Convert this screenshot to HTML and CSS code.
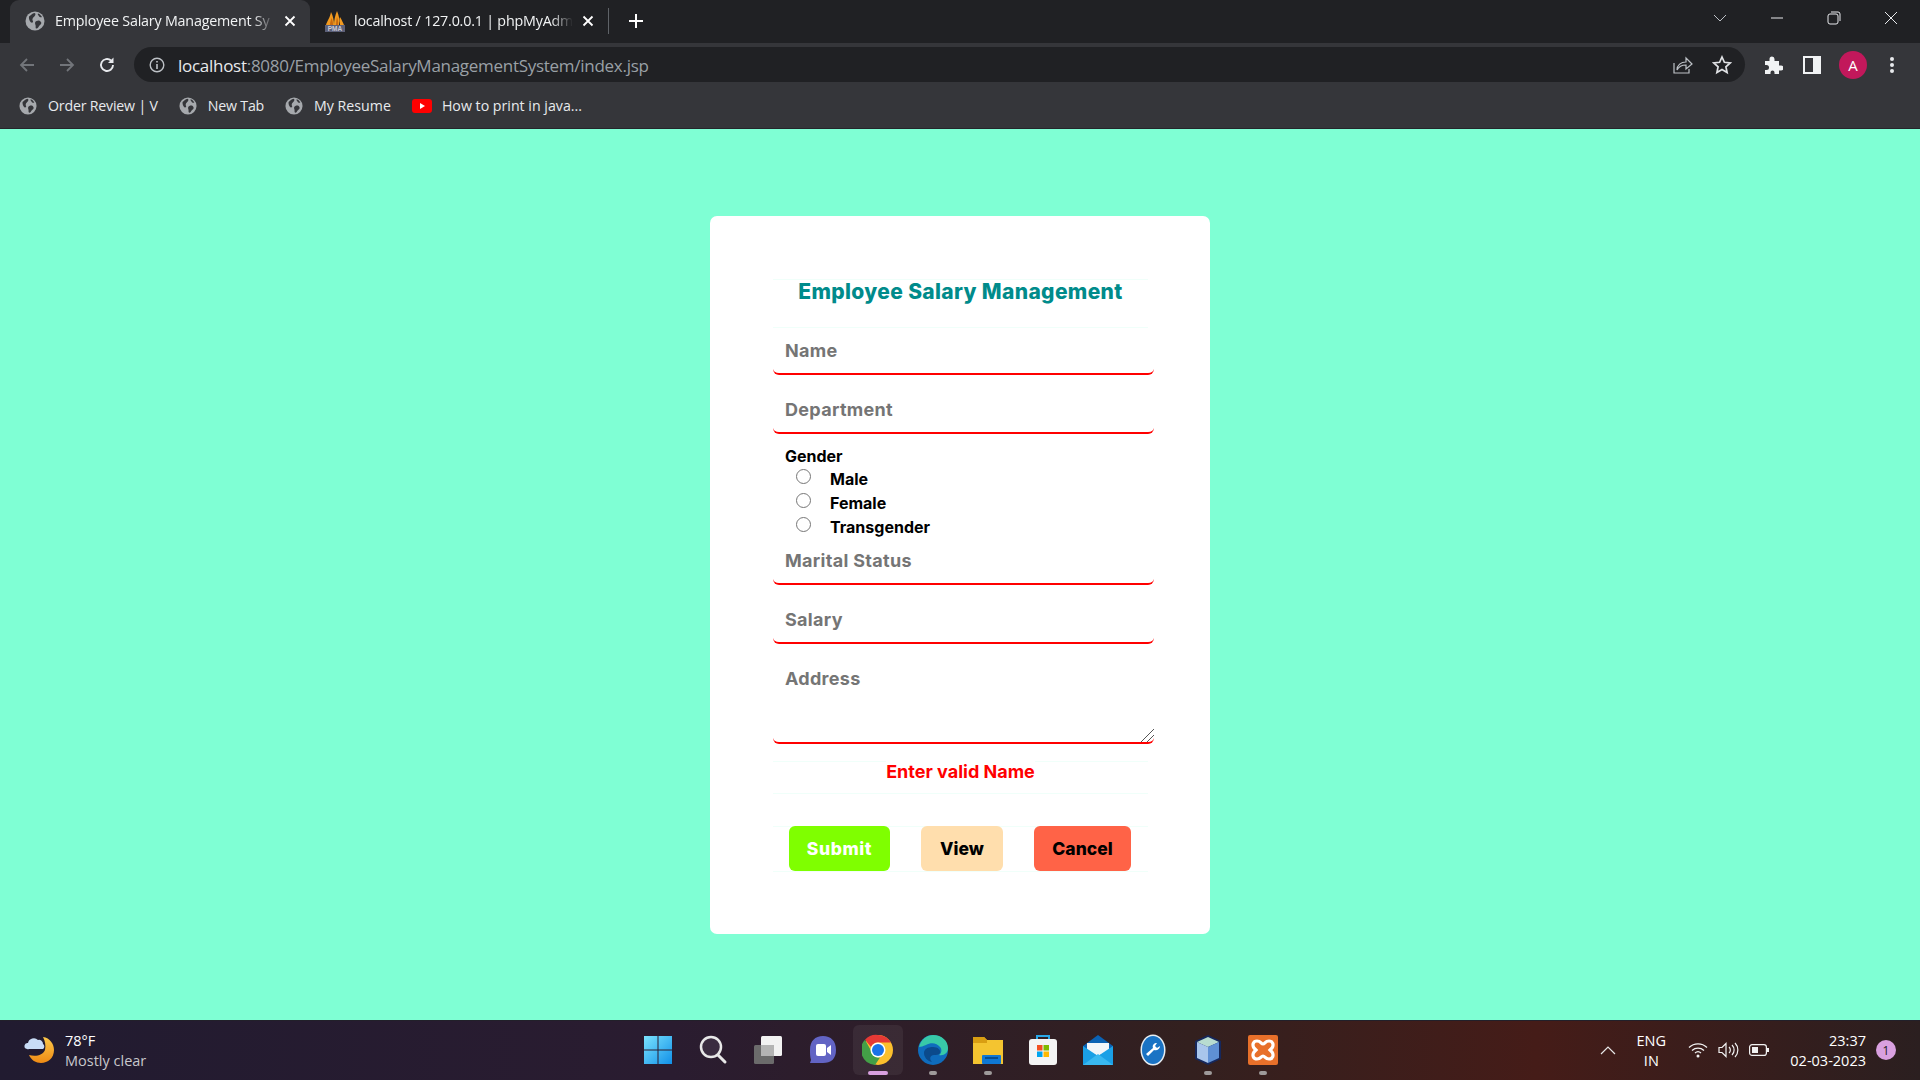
FILE: index.html
```html
<!DOCTYPE html>
<html>
<head>
    <title>Employee Salary Management System</title>
    <link rel="stylesheet" href="styles.css">
</head>
<body>

<svg class="defs" width="0" height="0">
    <symbol id="globe" viewBox="0 0 20 20">
        <circle cx="10" cy="10" r="9.500" fill="#a6a9ad"/>
        <path d="M4 5.500C6 4 7 2.500 9.500 2c1.500.5 1 2 .2 3S8 6.500 7.500 8s1.500 2.500 0 3.500S3.500 9 4 5.500zM11.500 10c2-1 3.500-.5 4.500 1s-.5 2.500-1.500 3.500-1.500 3-3 3-.5-2-1-3.500-1-3 1-4zM13 2.500c2 .5 3 2 4 3.500-1 .8-2.500.2-3-.8s-1.800-1.700-1-2.700z" fill="#35363a"/>
    </symbol>
</svg>

<header class="chrome">
    <div class="tabstrip">
        <div class="tab active">
            <svg class="favicon" width="20" height="20"><use href="#globe"/></svg>
            <span class="tab-title">Employee Salary Management Sy</span>
            <svg class="tab-close" width="12" height="12" viewBox="0 0 12 12"><path d="M1.500 1.500l9 9M10.500 1.500l-9 9" stroke="#fff" stroke-width="1.800"/></svg>
        </div>
        <div class="tab">
            <svg class="favicon tab-pma" width="20" height="22" viewBox="0 0 20 22">
                <path d="M1 15C2 11 5 8 6 2c2 4 3 8 3 13zM9 15c0-5 1-9 3-14 2 5 3 9 2 14zM15 15c0-3-1-6 0-8 2 3 3 6 4 8z" fill="#f29a1f"/>
                <path d="M5 15c0-3 1-5 1.500-7 1 2 1.500 4 1.500 7zM11 15c0-3 .5-6 1-8 1 3 1.500 5 1 8z" fill="#c96a10"/>
                <rect x="0" y="15" width="20" height="7" fill="#5c6078"/>
                <text class="pma-text" x="10" y="21" text-anchor="middle">PMA</text>
            </svg>
            <span class="tab-title">localhost / 127.0.0.1 | phpMyAdm</span>
            <svg class="tab-close" width="12" height="12" viewBox="0 0 12 12"><path d="M1.500 1.500l9 9M10.500 1.500l-9 9" stroke="#fff" stroke-width="1.800"/></svg>
        </div>
        <div class="tab-sep"></div>
        <svg class="new-tab" width="16" height="16" viewBox="0 0 16 16"><path d="M8 1v14M1 8h14" stroke="#fff" stroke-width="2"/></svg>
        <div class="window-controls">
            <svg width="14" height="8" viewBox="0 0 14 8"><path d="M1 1l6 6 6-6" fill="none" stroke="#bdc1c6"/></svg>
            <svg width="14" height="14" viewBox="0 0 14 14"><path d="M1 7h12" stroke="#e8eaed"/></svg>
            <svg width="14" height="14" viewBox="0 0 14 14"><rect x="1" y="3" width="10" height="10" rx="2" fill="none" stroke="#e8eaed"/><path d="M4 1h7a2 2 0 0 1 2 2v7" fill="none" stroke="#e8eaed"/></svg>
            <svg width="14" height="14" viewBox="0 0 14 14"><path d="M1 1l12 12M13 1L1 13" stroke="#e8eaed"/></svg>
        </div>
    </div>

    <div class="toolbar">
        <svg class="nav-icon" width="18" height="18" viewBox="0 0 18 18"><path d="M16 9H3M9 3L3 9l6 6" fill="none" stroke="#72757a" stroke-width="1.800"/></svg>
        <svg class="nav-icon" width="18" height="18" viewBox="0 0 18 18"><path d="M2 9h13M9 3l6 6-6 6" fill="none" stroke="#72757a" stroke-width="1.800"/></svg>
        <svg class="nav-icon" width="18" height="18" viewBox="0 0 18 18"><path d="M15 9a6 6 0 1 1-2-4.500" fill="none" stroke="#e8eaed" stroke-width="1.900"/><path d="M15.500 1.500V7H10z" fill="#e8eaed"/></svg>
        <div class="omnibox">
            <svg width="16" height="16" viewBox="0 0 16 16"><circle cx="8" cy="8" r="6.800" fill="none" stroke="#bdc1c6" stroke-width="1.400"/><path d="M8 7v5M8 4v1.600" stroke="#bdc1c6" stroke-width="1.600"/></svg>
            <span class="url"><span class="url-host">localhost</span>:8080/EmployeeSalaryManagementSystem/index.jsp</span>
            <svg class="omni-share" width="20" height="20" viewBox="0 0 20 20"><path d="M1 8v10h15v-4" fill="none" stroke="#bdc1c6" stroke-width="1.200"/><path d="M4 15c0-5 4-8 9-8V3l6 6-6 5v-4c-4 0-7 1-9 5z" fill="none" stroke="#bdc1c6" stroke-width="1.200"/></svg>
            <svg width="20" height="20" viewBox="0 0 20 20"><path d="M10 2l2.400 5.300 5.800.6-4.300 3.900 1.200 5.700L10 14.600l-5.100 2.900 1.200-5.700-4.300-3.900 5.800-.6z" fill="none" stroke="#e0e2e5" stroke-width="1.700"/></svg>
        </div>
        <div class="toolbar-right">
            <svg width="20" height="20" viewBox="0 0 20 20"><path d="M2 6h4.500V4a2.500 2.500 0 0 1 5 0v2H16v4.500h2a2.500 2.500 0 0 1 0 5h-2V19h-4.500v-1.500a2 2 0 0 0-4 0V19H2v-4h1.500a2.500 2.500 0 0 0 0-5H2z" fill="#f1f3f4"/></svg>
            <svg width="18" height="18" viewBox="0 0 18 18"><rect width="18" height="18" fill="#f1f3f4"/><rect x="2" y="2" width="8" height="14" fill="#35363a"/></svg>
            <div class="avatar">A</div>
            <svg width="6" height="18" viewBox="0 0 6 18"><circle cx="3" cy="3" r="2" fill="#e8eaed"/><circle cx="3" cy="9" r="2" fill="#e8eaed"/><circle cx="3" cy="15" r="2" fill="#e8eaed"/></svg>
        </div>
    </div>

    <div class="bookmarks">
        <div class="bookmark"><svg width="18" height="18"><use href="#globe"/></svg>Order Review | V</div>
        <div class="bookmark"><svg width="18" height="18"><use href="#globe"/></svg>New Tab</div>
        <div class="bookmark bookmark-wide"><svg width="18" height="18"><use href="#globe"/></svg>My Resume</div>
        <div class="bookmark bookmark-wide bookmark-yt"><svg width="20" height="14" viewBox="0 0 20 14"><rect width="20" height="14" rx="3" fill="#f00"/><path d="M8 4l5 3-5 3z" fill="#fff"/></svg>How to print in java...</div>
    </div>
</header>

<main class="page">
    <div class="card">
        <h2 class="heading">Employee Salary Management</h2>
        <form class="emp-form">
            <input class="field" type="text" placeholder="Name">
            <input class="field" type="text" placeholder="Department">
            <div class="gender">
                <div class="gender-title">Gender</div>
                <label class="radio-row"><input type="radio" name="gender"><span>Male</span></label>
                <label class="radio-row"><input type="radio" name="gender"><span>Female</span></label>
                <label class="radio-row"><input type="radio" name="gender"><span>Transgender</span></label>
            </div>
            <input class="field" type="text" placeholder="Marital Status">
            <input class="field" type="text" placeholder="Salary">
            <textarea class="field field-area" placeholder="Address"></textarea>
            <div class="error-row"><span>Enter valid Name</span></div>
            <div class="btn-row">
                <button type="button" class="btn btn-submit">Submit</button>
                <button type="button" class="btn btn-view">View</button>
                <button type="button" class="btn btn-cancel">Cancel</button>
            </div>
        </form>
    </div>
</main>

<footer class="taskbar">
    <div class="weather">
        <svg width="32" height="32" viewBox="0 0 32 32">
            <defs><linearGradient id="moon" x1="0" y1="0" x2="0" y2="1"><stop offset="0" stop-color="#fdc94a"/><stop offset="1" stop-color="#ee8a14"/></linearGradient></defs>
            <path d="M19 3c7 1 11 7 11 13 0 8-6 13-13 13-5 0-10-3-12-8 7 2 14 0 16-5 1-5 0-9-2-13z" fill="url(#moon)"/>
            <path d="M3 15a3 3 0 0 1 1-6 6 6 0 0 1 10-3 4 4 0 0 1 5 4 3 3 0 0 1 0 5 2 2 0 0 1-1 0H5a3 3 0 0 1-2 0z" fill="#c8dcf6"/>
        </svg>
        <div class="weather-text">
            <div>78°F</div>
            <div class="weather-sub">Mostly clear</div>
        </div>
    </div>

    <div class="task-icons">
        <div class="task-icon">
            <svg width="32" height="30" viewBox="0 0 32 30">
                <defs><linearGradient id="win" x1="0" y1="0" x2="1" y2="1"><stop offset="0" stop-color="#7be3fd"/><stop offset="1" stop-color="#1190e8"/></linearGradient></defs>
                <path d="M2 1h13.500v13.500H2zM16.500 1H30v13.500H16.500zM2 15.500h13.500V29H2zM16.500 15.500H30V29H16.500z" fill="url(#win)"/>
            </svg>
        </div>
        <div class="task-icon">
            <svg width="30" height="30" viewBox="0 0 30 30"><circle cx="13" cy="12" r="10" fill="#3a2c40" stroke="#e8e8e8" stroke-width="2.500"/><path d="M20 20l7 7" stroke="#e8e8e8" stroke-width="3" stroke-linecap="round"/></svg>
        </div>
        <div class="task-icon">
            <svg width="30" height="30" viewBox="0 0 30 30"><rect x="1" y="10" width="20" height="19" rx="1.500" fill="#6b6b6b"/><rect x="8" y="1" width="21" height="20" rx="1.500" fill="#f2f2f2"/><rect x="8" y="10" width="13" height="11" fill="#b4b4b4"/></svg>
        </div>
        <div class="task-icon">
            <svg width="30" height="32" viewBox="0 0 30 32"><path d="M15 2c8 0 13 5 13 14s-5 13-13 13H2l1-3C2 23 2 19 2 16 2 7 7 2 15 2z" fill="#6264c4"/><rect x="8" y="10" width="10" height="12" rx="2" fill="#fff"/><path d="M19 14l4-3v10l-4-3z" fill="#fff"/></svg>
        </div>
        <div class="task-icon task-active">
            <svg width="32" height="32" viewBox="0 0 32 32">
                <circle cx="16" cy="16" r="15" fill="#fbc02d"/>
                <path d="M16 1a15 15 0 0 1 13 7.500H16a7.500 7.500 0 0 0-7 4.500L3 5.800A15 15 0 0 1 16 1z" fill="#e53935"/>
                <path d="M3 5.800l6.500 11.700a7.500 7.500 0 0 0 8.500 6L13 31A15 15 0 0 1 3 5.800z" fill="#43a047"/>
                <circle cx="16" cy="16" r="7.500" fill="#fff"/>
                <circle cx="16" cy="16" r="6" fill="#1a73e8"/>
            </svg>
            <i class="dot dot-active"></i>
        </div>
        <div class="task-icon">
            <svg width="32" height="32" viewBox="0 0 32 32">
                <circle cx="16" cy="16" r="15" fill="#0f6cbd"/>
                <path d="M2 13C4 5 10 1 16 1c9 0 15 6 15 13 0 5-4 8-9 7 3-2 3-6 1-8-3-4-9-5-14-2-3 1-5 2-7 2z" fill="#38c9a8"/>
                <path d="M16 13c5 0 8 3 7 6-1 2-4 2-6 2-4 0-5 4-2 7-5-1-8-5-8-9s4-6 9-6z" fill="#0b4a8c"/>
            </svg>
            <i class="dot"></i>
        </div>
        <div class="task-icon">
            <svg width="30" height="30" viewBox="0 0 30 30"><path d="M0 2h11l3 3h16v24H0z" fill="#f4c430"/><path d="M0 2h11l3 3v3H0z" fill="#d99e12"/><rect x="9" y="20" width="19" height="9" rx="1" fill="#0f78d4"/><rect x="12" y="22" width="13" height="2" fill="#064e92"/></svg>
            <i class="dot"></i>
        </div>
        <div class="task-icon">
            <svg width="30" height="32" viewBox="0 0 30 32"><path d="M9 6V2h12v4" fill="none" stroke="#2aa8e8" stroke-width="2"/><rect x="1" y="5" width="28" height="26" rx="3" fill="#f4f4f4"/><rect x="9" y="11" width="5.500" height="5.500" fill="#f25022"/><rect x="15.500" y="11" width="5.500" height="5.500" fill="#7fba00"/><rect x="9" y="17.500" width="5.500" height="5.500" fill="#00a4ef"/><rect x="15.500" y="17.500" width="5.500" height="5.500" fill="#ffb900"/></svg>
        </div>
        <div class="task-icon">
            <svg width="30" height="30" viewBox="0 0 30 30"><path d="M15 0L0 11v8h30v-8z" fill="#0a62b4"/><path d="M4 8h22v8l-11 5-11-5z" fill="#f1f5f9"/><path d="M0 11l15 10 15-10v19H0z" fill="#1aa0e6"/><path d="M0 30l15-11 15 11z" fill="#39b8f0"/></svg>
        </div>
        <div class="task-icon">
            <svg width="26" height="32" viewBox="0 0 26 32"><ellipse cx="13" cy="16" rx="12.500" ry="15.500" fill="#e8eef2"/><ellipse cx="13" cy="16" rx="11" ry="14" fill="#1a73c4"/><path d="M6 20l7-6c-1-3 1-5 4-5l-2 3 2 2 3-2c0 3-3 5-6 4l-6 6z" fill="#fff"/></svg>
        </div>
        <div class="task-icon">
            <svg width="28" height="32" viewBox="0 0 28 32"><path d="M14 1l13 6v18l-13 6-13-6V7z" fill="#16285c"/><path d="M14 3l11 5-11 5-11-5z" fill="#b8dcd0"/><path d="M3 8l11 5v16L3 24z" fill="#a9c6ec"/><path d="M25 8l-11 5v16l11-5z" fill="#5f90d4"/></svg>
            <i class="dot"></i>
        </div>
        <div class="task-icon">
            <svg width="30" height="30" viewBox="0 0 30 30"><rect width="30" height="30" rx="2" fill="#e8702a"/><path d="M9 6c4 0 4 3 6 3s2-3 6-3 5 4 3 7l-2 2 2 2c2 3 1 7-3 7s-4-3-6-3-2 3-6 3-5-4-3-7l2-2-2-2c-2-3-1-7 3-7z" fill="none" stroke="#fff" stroke-width="3.200"/></svg>
            <i class="dot"></i>
        </div>
    </div>

    <div class="tray">
        <svg width="16" height="9" viewBox="0 0 16 9"><path d="M1 8l7-7 7 7" fill="none" stroke="#e8e8e8" stroke-width="1.200"/></svg>
        <div class="tray-lang">ENG<br>IN</div>
        <svg width="20" height="16" viewBox="0 0 20 16"><path d="M1 5.500a13 13 0 0 1 18 0M4 8.500a9 9 0 0 1 12 0M7 11a4.500 4.500 0 0 1 6 0" fill="none" stroke="#f2f2f2" stroke-width="1.300"/><circle cx="10" cy="14" r="1.500" fill="#f2f2f2"/></svg>
        <svg width="21" height="16" viewBox="0 0 21 16"><path d="M1 5.500h3l4-4v13l-4-4H1z" fill="none" stroke="#f2f2f2" stroke-width="1.200"/><path d="M11 5a4 4 0 0 1 0 6M14 3a7 7 0 0 1 0 10M17 1a10 10 0 0 1 0 14" fill="none" stroke="#f2f2f2" stroke-width="1.200"/></svg>
        <svg width="20" height="12" viewBox="0 0 20 12"><rect x=".6" y=".6" width="16.800" height="10.800" rx="2.500" fill="none" stroke="#f2f2f2" stroke-width="1.200"/><rect x="3" y="3" width="6" height="6" fill="#f2f2f2"/><rect x="18" y="4" width="2" height="4" fill="#f2f2f2"/></svg>
        <div class="tray-clock">23:37<br>02-03-2023</div>
        <div class="tray-badge">1</div>
    </div>
</footer>

</body>
</html>
```

FILE: styles.css
```css
* { box-sizing: border-box; }
html, body { margin: 0; height: 100%; }
body { display: flex; flex-direction: column; height: 1080px; overflow: hidden; font-family: "Open Sans", "Noto Sans", sans-serif; background-color: #7fffd4; }
.defs { position: absolute; }

/* browser frame */
.chrome { color: #e8eaed; background-color: #35363a; border-bottom: 1px solid #25262a; height: 129px; }
.tabstrip { display: flex; align-items: center; height: 43px; padding: 0 0 0 10px; background-color: #202124; }
.tab { display: flex; align-items: center; width: 298px; height: 43px; padding: 0 14px 2px 15px; font-size: 14.300px; border-radius: 9px 9px 0 0; }
.tab.active { width: 300px; background-color: #35363a; }
.favicon { flex: none; }
.tab-pma { margin-right: -1px; }
.pma-text { font-family: "Liberation Sans", sans-serif; font-size: 6.500px; font-weight: 700; fill: #c9cbd6; }
.tab-title { flex: 1; margin: 0 9px 0 10px; overflow: hidden; white-space: nowrap; color: #f1f3f4; letter-spacing: -0.2px; -webkit-mask-image: linear-gradient(90deg, #000 90%, transparent); mask-image: linear-gradient(90deg, #000 90%, transparent); }
.tab-close { flex: none; }
.tab-sep { width: 1px; height: 26px; margin-bottom: 2px; background-color: #5f6368; }
.new-tab { margin: 0 0 2px 19px; }
.window-controls { display: flex; align-items: center; gap: 43px; align-self: flex-start; height: 14px; margin: 11px 0 0 auto; padding-right: 22px; }

.toolbar { display: flex; align-items: center; height: 43px; padding: 0 25px 0 18px; }
.nav-icon { margin-right: 22px; }
.omnibox { display: flex; align-items: center; flex: 1; height: 35px; margin-left: -4px; padding: 0 13px 0 15px; background-color: #202124; border-radius: 18px; }
.url { flex: 1; margin-left: 13px; padding-top: 1px; font-size: 17px; color: #9aa0a6; letter-spacing: -0.28px; white-space: nowrap; }
.url-host { color: #e8eaed; }
.omni-share { margin-right: 19px; }
.toolbar-right { display: flex; align-items: center; gap: 20px; margin-left: 18px; }
.avatar { display: flex; align-items: center; justify-content: center; width: 28px; height: 28px; margin: 0 2px 0 -2px; font-size: 15px; color: #fff; background-color: #c2185b; border-radius: 50%; }

.bookmarks { display: flex; align-items: center; gap: 21px; height: 42px; padding: 0 0 3px 19px; font-size: 14.200px; letter-spacing: -0.2px; }
.bookmark { display: flex; align-items: center; gap: 11px; white-space: nowrap; }
.bookmark-wide { letter-spacing: 0; }
.bookmark-yt { gap: 10px; }

/* page */
.page { flex: 1; padding-top: 87px; min-height: 0; }
.card { width: 500px; height: 718px; margin: 0 auto; padding: 63px 56px 0 63px; background-color: #fff; border-radius: 7px; }
.heading { width: 375px; height: 49px; margin: 0; font-family: Inter, sans-serif; font-size: 21px; font-weight: 800; letter-spacing: 0.35px; line-height: 23px; text-align: center; color: #008b8b; border-top: 1px solid #f0fffa; border-bottom: 1px solid #f0fffa; }

.emp-form { width: 381px; font-family: Inter, sans-serif; font-weight: 700; }
.field { display: block; width: 381px; height: 47px; margin-bottom: 12px; padding: 0 12px; font-family: Inter, sans-serif; font-size: 18px; font-weight: 700; letter-spacing: 0.3px; border: 0; border-bottom: 2px solid #f00; border-radius: 6px; outline: none; }
.field::placeholder { color: #757575; opacity: 1; }
.field-area { height: 88px; margin-bottom: 17px; padding-top: 12px; }
.field-area::-webkit-resizer { background: linear-gradient(135deg, transparent 54%, #555 54%, #555 59%, transparent 59%, transparent 74%, #555 74%, #555 79%, transparent 79%); }

.gender { height: 104px; margin-top: -12px; padding: 13px 0 0 12px; }
.gender-title { font-size: 16px; line-height: 19px; }
.radio-row { display: flex; height: 24px; padding-left: 11px; font-size: 16px; }
.radio-row input { width: 15px; height: 15px; margin: 3px 19px 0 0; }
.radio-row span { line-height: 27px; }

.error-row { width: 375px; height: 33px; font-size: 18px; line-height: 20px; text-align: center; color: #f00; border-top: 1px solid #f0fffa; border-bottom: 1px solid #f0fffa; }
.error-row span { position: relative; top: -1px; display: inline-block; padding-top: 1px; background-color: #fff; }

.btn-row { display: flex; gap: 31px; width: 375px; margin-top: 32px; padding-left: 16px; border-top: 1px solid #f0fffa; border-bottom: 1px solid #f0fffa; }
.btn { height: 45px; margin-top: -1px; padding: 0; font-family: Inter, sans-serif; font-size: 17.500px; font-weight: 800; border: none; border-radius: 6px; }
.btn-submit { width: 101px; letter-spacing: 0.6px; color: #fff; background-color: #7fff00; }
.btn-view { width: 82px; color: #000; background-color: #ffdead; }
.btn-cancel { width: 97px; color: #000; background-color: #ff6347; }

/* windows taskbar */
.taskbar { display: grid; grid-template-columns: 1fr auto 1fr; align-items: center; height: 60px; padding-bottom: 1px; color: #fff; border-top: 1px solid #22202a; background: linear-gradient(90deg, #211b30 0%, #2a1c30 35%, #33201f 62%, #451c18 80%, #2b1f20 100%); }
.weather { display: flex; align-items: center; gap: 9px; padding-left: 24px; }
.weather-text { padding-top: 2px; font-size: 14.500px; line-height: 20px; }
.weather-sub { color: #c8c8cc; }
.task-icons { display: flex; }
.task-icon { position: relative; display: flex; align-items: center; justify-content: center; width: 55px; height: 50px; }
.task-active::before { content: ""; position: absolute; top: 0; left: 3px; width: 50px; height: 50px; background-color: rgba(255,255,255,0.06); border-radius: 6px; }
.task-active svg { position: relative; }
.dot { position: absolute; bottom: 0; left: 24px; width: 8px; height: 4px; background-color: #9e9a9a; border-radius: 2px; }
.dot-active { left: 18px; width: 20px; background-color: #d9a0e0; }
.tray { display: flex; align-items: center; justify-content: flex-end; padding-right: 24px; font-size: 14.500px; }
.tray-lang { width: 44px; margin: 0 15px 0 13px; padding-top: 2px; line-height: 20px; text-align: center; }
.tray svg + svg { margin-left: 10px; }
.tray-clock { margin-left: 21px; padding-top: 2px; line-height: 20px; text-align: right; }
.tray-badge { display: flex; align-items: center; justify-content: center; width: 20px; height: 20px; margin-left: 10px; font-size: 12px; color: #222; background-color: #d9a0e0; border-radius: 50%; }
```
